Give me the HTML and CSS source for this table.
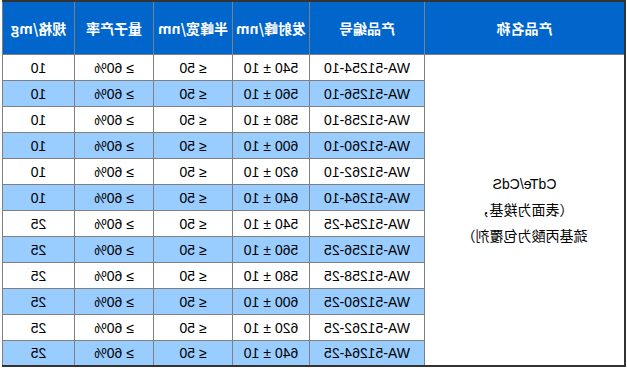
FILE: index.html
```html
<!DOCTYPE html>
<html lang="zh-CN">
<head>
<meta charset="utf-8">
<title>产品列表</title>
<link rel="stylesheet" href="styles.css">
</head>
<body>
<div class="sheet">
<table class="products">
  <thead>
    <tr>
      <th class="c-name">产品名称</th>
      <th class="c-code">产品编号</th>
      <th class="c-em">发射峰/nm</th>
      <th class="c-fw">半峰宽/nm</th>
      <th class="c-qy">量子产率</th>
      <th class="c-spec">规格/mg</th>
    </tr>
  </thead>
  <tbody>
    <tr>
      <td class="name" rowspan="12">CdTe/CdS<br>（表面为羧基，<br>巯基丙酸为包覆剂）</td>
      <td>WA-51254-10</td><td>540 ± 10</td><td>≤ 50</td><td>≥ 60%</td><td>10</td>
    </tr>
    <tr class="alt"><td>WA-51256-10</td><td>560 ± 10</td><td>≤ 50</td><td>≥ 60%</td><td>10</td></tr>
    <tr><td>WA-51258-10</td><td>580 ± 10</td><td>≤ 50</td><td>≥ 60%</td><td>10</td></tr>
    <tr class="alt"><td>WA-51260-10</td><td>600 ± 10</td><td>≤ 50</td><td>≥ 60%</td><td>10</td></tr>
    <tr><td>WA-51262-10</td><td>620 ± 10</td><td>≤ 50</td><td>≥ 60%</td><td>10</td></tr>
    <tr class="alt"><td>WA-51264-10</td><td>640 ± 10</td><td>≤ 50</td><td>≥ 60%</td><td>10</td></tr>
    <tr><td>WA-51254-25</td><td>540 ± 10</td><td>≤ 50</td><td>≥ 60%</td><td>25</td></tr>
    <tr class="alt"><td>WA-51256-25</td><td>560 ± 10</td><td>≤ 50</td><td>≥ 60%</td><td>25</td></tr>
    <tr><td>WA-51258-25</td><td>580 ± 10</td><td>≤ 50</td><td>≥ 60%</td><td>25</td></tr>
    <tr class="alt"><td>WA-51260-25</td><td>600 ± 10</td><td>≤ 50</td><td>≥ 60%</td><td>25</td></tr>
    <tr><td>WA-51262-25</td><td>620 ± 10</td><td>≤ 50</td><td>≥ 60%</td><td>25</td></tr>
    <tr class="alt last"><td>WA-51264-25</td><td>640 ± 10</td><td>≤ 50</td><td>≥ 60%</td><td>25</td></tr>
  </tbody>
</table>
</div>
</body>
</html>
```

FILE: styles.css
```css
html, body {
  margin: 0;
  padding: 0;
  background: #ffffff;
}

.sheet {
  width: 627px;
  height: 368px;
  overflow: hidden;
  transform: scaleX(-1);
}

.products {
  box-sizing: border-box;
  width: 624px;
  margin-left: 1px;
  table-layout: fixed;
  border-collapse: separate;
  border-spacing: 0;
  border-top: 2px solid #333333;
  border-left: 2px solid #333333;
  border-bottom: 2px solid #333333;
  font-family: "Liberation Sans", "Noto Sans CJK SC", sans-serif;
  font-size: 14px;
  color: #000000;
}

.products th,
.products td {
  box-sizing: border-box;
  padding: 0;
  text-align: center;
  vertical-align: middle;
  border-right: 1px solid #808080;
  border-bottom: 1px solid #808080;
  white-space: nowrap;
}

.products th {
  height: 53px;
  background: #0066cc;
  color: #ffffff;
  font-weight: bold;
  font-family: "Noto Sans CJK SC", "Liberation Sans", sans-serif;
  font-size: 14px;
}

.c-name { width: 200px; }
.c-code { width: 115px; }
.c-em { width: 77px; }
.c-fw { width: 79px; }
.c-qy { width: 79px; }
.c-spec { width: 72px; }

.products td {
  height: 26px;
  background: #ffffff;
  line-height: 16px;
}

.products tr.alt td {
  background: #99ccff;
}

.products tr.last td {
  height: 24px;
  border-bottom: none;
}

.products td.name {
  background: #ffffff;
  border-bottom: none;
  line-height: 26px;
  font-family: "Liberation Sans", "Noto Sans CJK SC", sans-serif;
}
```
